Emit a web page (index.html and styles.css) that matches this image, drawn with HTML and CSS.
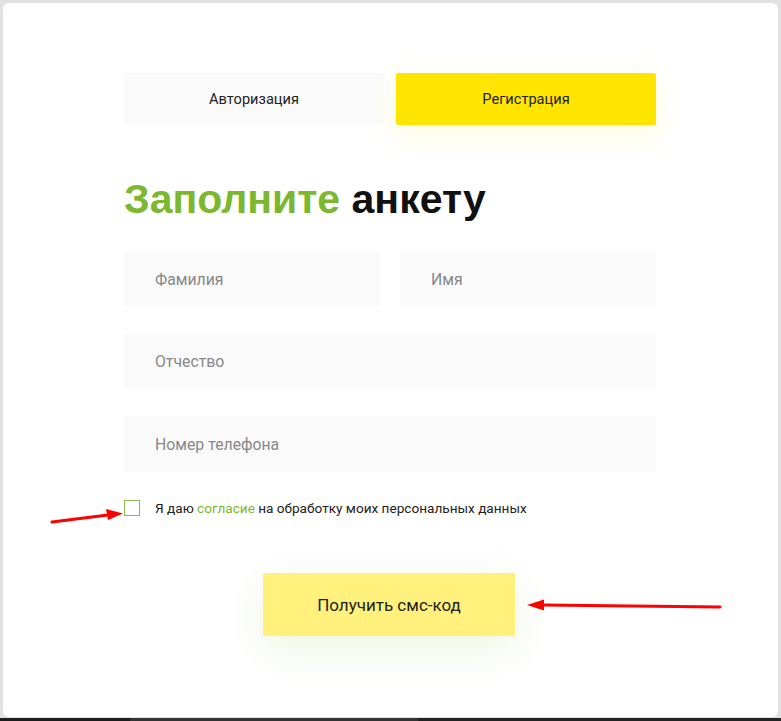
FILE: index.html
```html
<!DOCTYPE html>
<html lang="ru">

<head>
  <meta charset="UTF-8">
  <title>Регистрация</title>
  <link rel="stylesheet" href="styles.css">
</head>

<body>
  <div class="card">
    <div class="form">
      <!-- Tabs -->
      <div class="tabs">
        <button class="tab">Авторизация</button>
        <button class="tab active">Регистрация</button>
      </div>

      <h1 class="title"><span class="green">Заполните</span> анкету</h1>

      <div class="row">
        <input type="text" placeholder="Фамилия">
        <input type="text" placeholder="Имя">
      </div>
      <div class="row">
        <input type="text" placeholder="Отчество">
      </div>
      <div class="row last">
        <input type="text" placeholder="Номер телефона">
      </div>

      <label class="agree">
        <span class="box"></span>
        <span>Я даю <a href="#">согласие</a> на обработку моих персональных данных</span>
      </label>

      <div class="submit">
        <button class="sms">Получить смс-код</button>
      </div>
    </div>

    <!-- annotation arrows -->
    <svg class="arrows" width="775" height="714" viewBox="0 0 775 714">
      <path d="M49 519 L105 512" stroke="#f00" stroke-width="3" stroke-linecap="round" />
      <path d="M120 510.5 L103 506 L105 517 Z" fill="#f00" />
      <path d="M717 604 L540 602" stroke="#f00" stroke-width="3" stroke-linecap="round" />
      <path d="M524 602 L541 596.5 L541 607.5 Z" fill="#f00" />
    </svg>
  </div>
  <div class="taskbar"></div>
</body>

</html>
```

FILE: styles.css
```css
html,
body {
  margin: 0;
  height: 721px;
  overflow: hidden;
}

body {
  background: #e2e2e2;
  padding: 3px 3px 0;
  box-sizing: border-box;
  font-family: Roboto, 'Noto Sans', sans-serif;
}

.card {
  position: relative;
  height: 714px;
  padding-right: 1px;
  background: #fff;
  border-radius: 6px;
}

.taskbar {
  height: 3px;
  margin: 1px -3px 0;
  background: linear-gradient(90deg, #1c1c1c 0 130px, #333 130px 418px, #222 418px);
}

.form {
  width: 532px;
  margin: 0 auto;
  padding-top: 70px;
}

.tabs {
  display: flex;
  gap: 12px;
}

.tab {
  flex: 1;
  height: 52px;
  border: none;
  border-radius: 2px;
  background: #fafafa;
  font-family: Roboto, sans-serif;
  font-size: 14.6px;
  color: #222;
}

.tab.active {
  background: #ffe500;
  box-shadow: 0 8px 30px rgba(255, 229, 0, 0.14);
}

.title {
  margin: 50px 0 28px;
  font-family: 'Liberation Sans', Arial, sans-serif;
  font-size: 41px;
  line-height: 48px;
  font-weight: 700;
  color: #111;
}

.green {
  color: #7cb82f;
}

.row {
  display: flex;
  gap: 20px;
  margin-bottom: 26px;
}

.row.last {
  margin-top: 27px;
}

.row input {
  flex: 1;
  min-width: 0;
  height: 56px;
  padding: 0 31px;
  border: none;
  border-radius: 3px;
  background: #fafafa;
  font-family: Roboto, sans-serif;
  font-size: 15.8px;
  color: #333;
}

.row input::placeholder {
  color: #888;
}

.agree {
  display: flex;
  align-items: center;
  gap: 15px;
  margin-top: 28px;
  font-size: 13.6px;
  color: #222;
}

.agree .box {
  width: 16px;
  height: 16px;
  box-sizing: border-box;
  border: 1.5px solid #8ab84a;
}

.agree a {
  color: #7cb82f;
  text-decoration: none;
}

.submit {
  display: flex;
  justify-content: center;
  margin-top: 57px;
}

.sms {
  width: 252px;
  height: 63px;
  margin-right: 2px;
  border: none;
  background: #fff17c;
  font-family: Roboto, sans-serif;
  font-size: 17px;
  color: #222;
  box-shadow: 0 12px 40px rgba(124, 184, 47, 0.14);
}

.arrows {
  position: absolute;
  left: 0;
  top: 0;
  pointer-events: none;
}
```
